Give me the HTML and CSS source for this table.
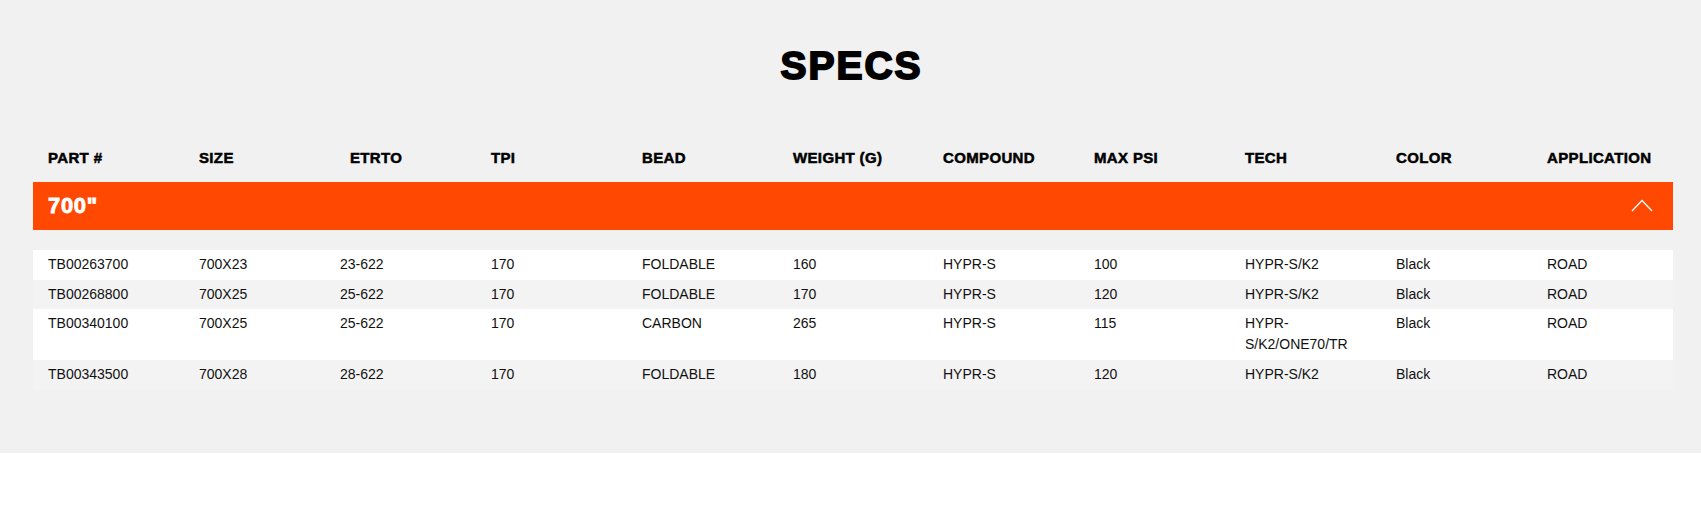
FILE: index.html
```html
<!DOCTYPE html>
<html lang="en">
<head>
<meta charset="utf-8">
<title>Specs</title>
<link rel="stylesheet" href="styles.css">
</head>
<body>
<section class="specs">
  <h1 class="specs-title">SPECS</h1>
  <div class="specs-table">
    <div class="spec-head">
      <div class="cell">PART #</div>
      <div class="cell">SIZE</div>
      <div class="cell cell-etrto-head">ETRTO</div>
      <div class="cell">TPI</div>
      <div class="cell">BEAD</div>
      <div class="cell">WEIGHT (G)</div>
      <div class="cell">COMPOUND</div>
      <div class="cell">MAX PSI</div>
      <div class="cell">TECH</div>
      <div class="cell">COLOR</div>
      <div class="cell">APPLICATION</div>
    </div>
    <div class="group-bar">
      <span class="group-name">700"</span>
      <svg class="chevron" width="22" height="13" viewBox="0 0 22 13" aria-hidden="true">
        <polyline points="1,12 11,1.5 21,12" fill="none" stroke="#ffffff" stroke-width="1.3"/>
      </svg>
    </div>
    <div class="spec-rows">
      <div class="spec-row">
        <div class="cell">TB00263700</div>
        <div class="cell">700X23</div>
        <div class="cell">23-622</div>
        <div class="cell">170</div>
        <div class="cell">FOLDABLE</div>
        <div class="cell">160</div>
        <div class="cell">HYPR-S</div>
        <div class="cell">100</div>
        <div class="cell">HYPR-S/K2</div>
        <div class="cell">Black</div>
        <div class="cell">ROAD</div>
      </div>
      <div class="spec-row">
        <div class="cell">TB00268800</div>
        <div class="cell">700X25</div>
        <div class="cell">25-622</div>
        <div class="cell">170</div>
        <div class="cell">FOLDABLE</div>
        <div class="cell">170</div>
        <div class="cell">HYPR-S</div>
        <div class="cell">120</div>
        <div class="cell">HYPR-S/K2</div>
        <div class="cell">Black</div>
        <div class="cell">ROAD</div>
      </div>
      <div class="spec-row">
        <div class="cell">TB00340100</div>
        <div class="cell">700X25</div>
        <div class="cell">25-622</div>
        <div class="cell">170</div>
        <div class="cell">CARBON</div>
        <div class="cell">265</div>
        <div class="cell">HYPR-S</div>
        <div class="cell">115</div>
        <div class="cell">HYPR-<br>S/K2/ONE70/TR</div>
        <div class="cell">Black</div>
        <div class="cell">ROAD</div>
      </div>
      <div class="spec-row">
        <div class="cell">TB00343500</div>
        <div class="cell">700X28</div>
        <div class="cell">28-622</div>
        <div class="cell">170</div>
        <div class="cell">FOLDABLE</div>
        <div class="cell">180</div>
        <div class="cell">HYPR-S</div>
        <div class="cell">120</div>
        <div class="cell">HYPR-S/K2</div>
        <div class="cell">Black</div>
        <div class="cell">ROAD</div>
      </div>
    </div>
  </div>
</section>
</body>
</html>
```

FILE: styles.css
```css
html, body {
  margin: 0;
  padding: 0;
  background: #ffffff;
}

body {
  font-family: "Liberation Sans", Arial, sans-serif;
  color: #111111;
}

.specs {
  background: #f1f1f1;
  padding: 44px 0 64px;
}

.specs-title {
  margin: 0 0 59px;
  text-align: center;
  font-size: 39px;
  line-height: 44px;
  font-weight: 700;
  letter-spacing: 2px;
  text-indent: 2px;
  color: #000000;
  -webkit-text-stroke: 1.9px #000000;
}

.specs-table {
  width: 1640px;
  margin-left: 33px;
  --cols: 151px 141px 151px 151px 151px 150px 151px 151px 151px 151px 1fr;
}

.spec-head,
.spec-row {
  display: grid;
  grid-template-columns: var(--cols);
  padding-left: 15px;
}

.spec-head {
  font-size: 15px;
  line-height: 21px;
  font-weight: 700;
  letter-spacing: 0.35px;
  color: #000000;
  -webkit-text-stroke: 0.5px #000000;
  margin-bottom: 14px;
}

.cell {
  padding-right: 14px;
}

.cell-etrto-head {
  padding-left: 10px;
}

.group-bar {
  display: flex;
  align-items: center;
  justify-content: space-between;
  height: 48px;
  padding: 0 20px 0 15px;
  background: #ff4902;
  color: #ffffff;
}

.group-name {
  font-size: 22px;
  line-height: 48px;
  font-weight: 700;
  letter-spacing: 0.7px;
  -webkit-text-stroke: 0.8px #ffffff;
}

.chevron {
  display: block;
  margin-top: -2px;
}

.spec-rows {
  margin-top: 20px;
}

.spec-row {
  font-size: 14px;
  line-height: 21px;
  padding-top: 4px;
  padding-bottom: 4.5px;
  background: #ffffff;
}

.spec-row:nth-child(even) {
  background: #f3f3f3;
}
```
